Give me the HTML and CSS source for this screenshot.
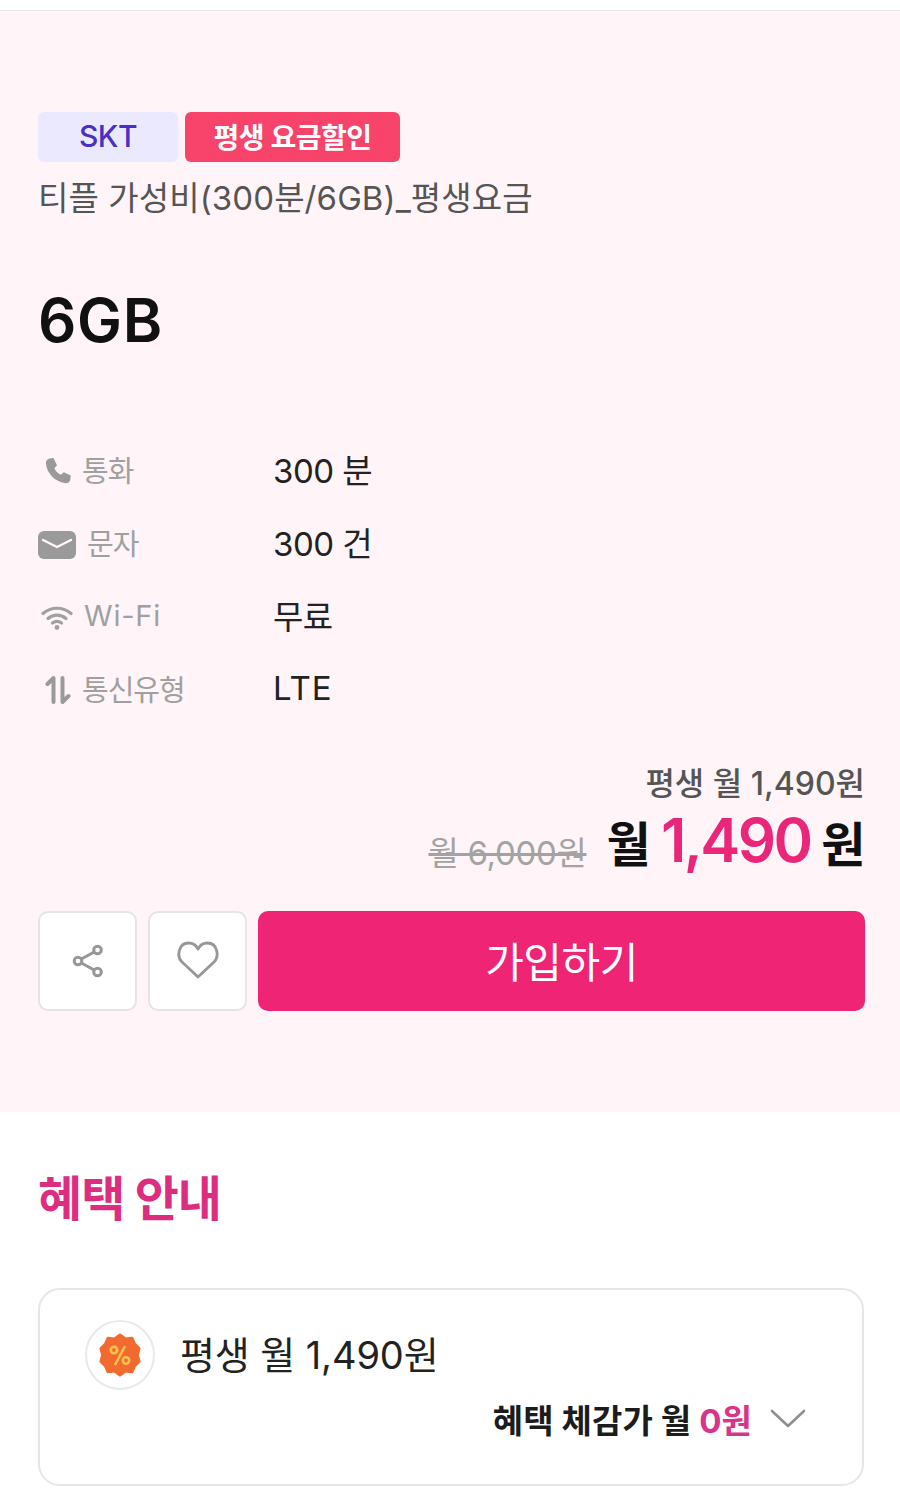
FILE: index.html
```html
<!DOCTYPE html>
<html lang="ko">
<head>
<meta charset="utf-8">
<title>티플 가성비</title>
<link rel="stylesheet" href="styles.css">
</head>
<body>
<div class="topbar"></div>
<section class="hero">
  <div class="tags">
    <span class="tag tag-carrier">SKT</span>
    <span class="tag tag-promo">평생 요금할인</span>
  </div>
  <p class="plan-name">티플 가성비(300분/6GB)_평생요금</p>
  <h1 class="data">6GB</h1>
  <dl class="specs">
    <div class="spec">
      <dt class="spec-label">
        <svg class="ico ico-call" viewBox="0 0 28 28"><path fill="#9a9a9a" d="M5.500 1.500 9.600 1 13 8.200l-2.600 3c1 2.600 3.600 5.300 6.400 6.500l3-2.500 7 3.400-.6 4.200c-.4 2.300-2.400 3.700-4.700 3.400C10.700 24.800 2.800 16.400 1.900 6.300 1.700 4 3.200 2 5.500 1.500Z"/></svg>
        <span>통화</span>
      </dt>
      <dd class="spec-value">300 분</dd>
    </div>
    <div class="spec">
      <dt class="spec-label">
        <svg class="ico ico-mail" viewBox="0 0 38 28"><rect width="38" height="28" rx="6" fill="#9a9a9a"/><path d="M5 9 19 16 33 9" fill="none" stroke="#fff7f9" stroke-width="2.400" stroke-linecap="round" stroke-linejoin="round"/></svg>
        <span>문자</span>
      </dt>
      <dd class="spec-value">300 건</dd>
    </div>
    <div class="spec">
      <dt class="spec-label">
        <svg class="ico ico-wifi" viewBox="0 0 32 26"><g fill="none" stroke="#a0a0a0" stroke-width="3.200" stroke-linecap="round"><path d="M2 9.500C10 2.500 22 2.500 30 9.500"/><path d="M7 14.500c5.400-4.400 12.600-4.400 18 0"/><path d="M11.500 19c2.800-2 6.200-2 9 0"/></g><circle cx="16" cy="23.500" r="2.400" fill="#a0a0a0"/></svg>
        <span class="latin-label">Wi-Fi</span>
      </dt>
      <dd class="spec-value">무료</dd>
    </div>
    <div class="spec">
      <dt class="spec-label">
        <svg class="ico ico-updown" viewBox="0 0 26 30"><g fill="none" stroke="#9a9a9a" stroke-width="4" stroke-linecap="round" stroke-linejoin="round"><path d="M2.500 9 8.500 3v24"/><path d="M17.500 3v24l6-6"/></g></svg>
        <span>통신유형</span>
      </dt>
      <dd class="spec-value spec-latin">LTE</dd>
    </div>
  </dl>
  <div class="price">
    <p class="price-note">평생 월 1,490원</p>
    <div class="price-row">
      <s class="price-old">월 6,000원</s>
      <p class="price-now">월 <strong class="price-num">1,490</strong> 원</p>
    </div>
  </div>
  <div class="actions">
    <button class="icon-btn" type="button" aria-label="공유">
      <svg class="ico-share" viewBox="0 0 32 34"><g fill="none" stroke="#979797" stroke-width="3"><circle cx="25.500" cy="6" r="3.800"/><circle cx="6" cy="17" r="3.800"/><circle cx="25.500" cy="28" r="3.800"/><path d="M9.300 15 22.200 8M9.300 19 22.200 26"/></g></svg>
    </button>
    <button class="icon-btn" type="button" aria-label="찜">
      <svg class="ico-heart" viewBox="0 0 42 38"><path fill="none" stroke="#979797" stroke-width="2.800" stroke-linejoin="round" d="M21 36 4.800 20.800C-.5 15.500 1.500 2 11.500 2c4.700 0 7.700 2.400 9.500 6 1.800-3.600 4.800-6 9.500-6 10 0 12 13.500 6.700 18.800Z"/></svg>
    </button>
    <button class="join" type="button">가입하기</button>
  </div>
</section>
<section class="benefits">
  <h2 class="benefits-title">혜택 안내</h2>
  <div class="benefit-card">
    <div class="benefit-main">
      <span class="badge-wrap">
        <svg class="ico-badge" viewBox="0 0 44 44"><path fill="#f26a30" stroke="#f26a30" stroke-width="3" stroke-linejoin="round" d="M22 2l5.500 3.900 6.500-.7 2.600 6 4.500 4.300-1.800 6.500 1.800 6.500-4.500 4.300-2.600 6-6.500-.7L22 42l-5.500-3.900-6.500.7-2.600-6-4.500-4.300 1.800-6.500-1.800-6.500 4.500-4.300 2.600-6 6.500.7Z"/><g fill="none" stroke="#fbc14f" stroke-width="2.600" stroke-linecap="round"><circle cx="16" cy="17" r="3.200"/><circle cx="28" cy="27.500" r="3.200"/><path d="M26.500 14 17.500 31"/></g></svg>
      </span>
      <span class="benefit-text">평생 월 1,490원</span>
    </div>
    <div class="benefit-sub">
      <span class="benefit-sub-text">혜택 체감가 월 <em class="zero">0원</em></span>
      <svg class="ico-chevron" viewBox="0 0 36 22"><path fill="none" stroke="#8f8f8f" stroke-width="2.600" stroke-linecap="round" stroke-linejoin="round" d="M2 3l16 15L34 3"/></svg>
    </div>
  </div>
</section>
</body>
</html>
```
FILE: styles.css
```css
* { box-sizing: border-box; }
html, body { margin: 0; padding: 0; }
body {
  width: 900px;
  height: 1498px;
  overflow: hidden;
  background: #fff;
  font-family: Inter, "Noto Sans CJK KR", "Noto Sans", sans-serif;
  color: #111;
}
p, h1, h2, dl, dd { margin: 0; }
.topbar { height: 11px; background: #fff; border-bottom: 1px solid #e9e7e8; }
.hero {
  height: 1101px;
  padding: 101px 35px 0 38px;
  background: #fff5f8;
}
.tags { display: flex; gap: 7px; height: 50px; }
.tag {
  display: flex;
  align-items: center;
  justify-content: center;
  height: 50px;
  padding-bottom: 2px;
  border-radius: 6px;
  font-size: 30px;
  font-weight: 500;
}
.tag-carrier { width: 140px; background: #ebe9fd; color: #4a2fc4; letter-spacing: -.5px; }
.tag-promo { width: 215px; background: #f8436b; color: #fff; font-size: 28px; font-weight: 600; letter-spacing: -.5px; }
.plan-name {
  margin-top: 14px;
  font-size: 33px;
  line-height: 44px;
  color: #555;
  letter-spacing: .1px;
}
.data {
  margin-top: 65px;
  font-size: 60px;
  line-height: 70px;
  font-weight: 600;
  color: #111;
  letter-spacing: .7px;
}
.specs { margin-top: 92px; display: flex; flex-direction: column; gap: 29px; }
.spec { display: flex; align-items: center; height: 44px; }
.spec-label {
  display: flex;
  align-items: center;
  width: 236px;
  font-size: 29px;
  color: #a0a0a0;
  letter-spacing: -1px;
}
.latin-label { letter-spacing: .8px; }
.spec-value { font-size: 33px; color: #222; letter-spacing: -.5px; margin-left: -1px; }
.spec-latin { letter-spacing: 1px; }
.ico { display: block; flex: none; margin-top: 3px; }
.ico-call { width: 28px; height: 28px; margin-left: 6px; margin-right: 10px; }
.ico-mail { width: 38px; height: 28px; margin-right: 11px; margin-top: 5px; }
.ico-wifi { width: 32px; height: 26px; margin-left: 3px; margin-right: 11px; }
.ico-updown { width: 26px; height: 30px; margin-left: 7px; margin-right: 11px; }
.price { margin-top: 52px; text-align: right; }
.price-note {
  font-size: 32px;
  line-height: 44px;
  font-weight: 500;
  color: #555;
}
.price-row { display: flex; justify-content: flex-end; align-items: baseline; gap: 22px; margin-top: -1px; }
.price-old { font-size: 33px; color: #a3a3a3; letter-spacing: -.3px; position: relative; top: 3px; left: 2px; }
.price-now { font-size: 48px; line-height: 70px; font-weight: 700; color: #111; letter-spacing: -.5px; }
.price-num { font-size: 60px; font-weight: 600; color: #ea2678; letter-spacing: -2.600px; }
.actions { display: flex; gap: 11px; margin-top: 31px; height: 100px; }
.icon-btn {
  display: flex;
  align-items: center;
  justify-content: center;
  width: 99px;
  height: 100px;
  padding: 0;
  background: #fff;
  border: 2px solid #e6e4e5;
  border-radius: 10px;
}
.ico-share { width: 32px; height: 34px; display: block; }
.ico-heart { width: 42px; height: 38px; display: block; margin-bottom: 2px; }
.join {
  flex: 1;
  height: 100px;
  padding-bottom: 4px;
  border: 0;
  border-radius: 10px;
  background: #ef2475;
  color: #fff;
  font-family: inherit;
  font-size: 42px;
  font-weight: 400;
  letter-spacing: -.5px;
}
.benefits { padding: 55px 36px 0 38px; }
.benefits-title {
  font-size: 48px;
  line-height: 64px;
  font-weight: 700;
  color: #dd2d80;
  letter-spacing: -1px;
}
.benefit-card {
  margin-top: 57px;
  height: 198px;
  border: 2px solid #e6e6e6;
  border-radius: 22px;
  padding: 30px 58px 0 45px;
}
.benefit-main { display: flex; align-items: center; gap: 25px; }
.badge-wrap {
  display: flex;
  align-items: center;
  justify-content: center;
  width: 70px;
  height: 70px;
  border: 2px solid #e9e9e9;
  border-radius: 50%;
}
.ico-badge { width: 44px; height: 44px; display: block; }
.benefit-text { font-size: 38px; color: #222; letter-spacing: -.1px; margin-bottom: 6px; }
.benefit-sub { display: flex; justify-content: flex-end; align-items: center; gap: 18px; margin-top: 5px; }
.benefit-sub-text { font-size: 33px; font-weight: 700; color: #1c1c1c; letter-spacing: .1px; }
.zero { font-style: normal; color: #d8348a; }
.ico-chevron { width: 36px; height: 22px; display: block; margin-right: -2px; }
```
